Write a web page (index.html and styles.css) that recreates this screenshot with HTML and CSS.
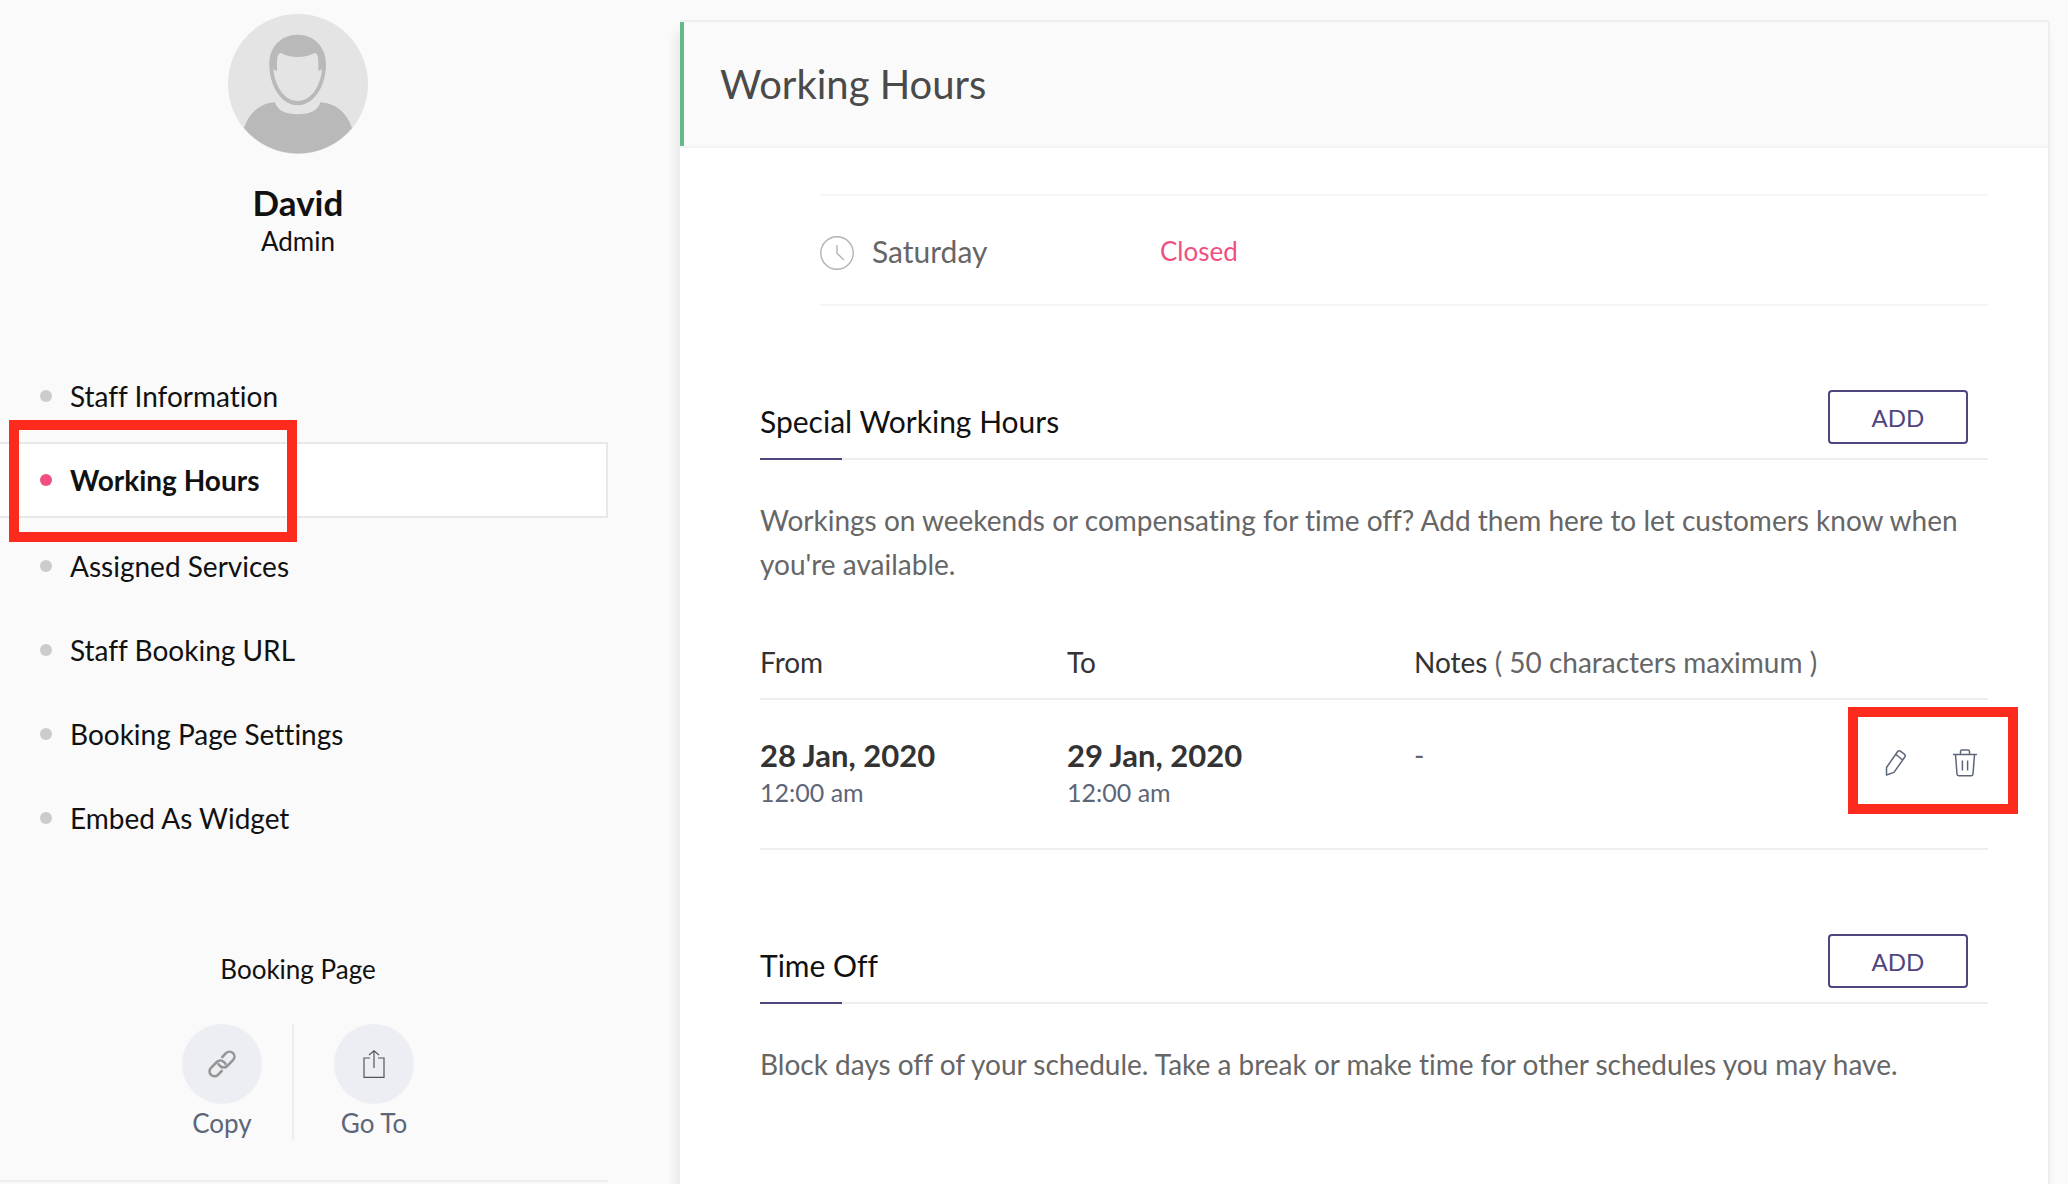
FILE: index.html
```html
<!DOCTYPE html>
<html lang="en">
<head>
<meta charset="utf-8">
<title>Working Hours</title>
<link rel="stylesheet" href="styles.css">
</head>
<body>
<aside class="sidebar">
    <div class="profile">
        <svg class="avatar" viewBox="0 0 140 140" aria-hidden="true">
            <circle cx="70" cy="70" r="70" fill="#e4e4e4"/>
            <path fill="#b9b9b9" d="M16 114C21 99 32 89 47 88.300C49 96 57 100.300 69.700 100.300S90.500 96 92.300 88.300C108 89 119 99 124 114A70 70 0 0 1 16 114z"/>
            <path fill="#b9b9b9" fill-rule="evenodd" d="M69.700 20.700C86 20.700 98 33 98 50C98 72 86 91.300 69.700 91.300S41.300 72 41.300 50C41.300 33 53 20.700 69.700 20.700zM52.300 38.700C49.500 41 49 44 49 48V57L45.300 55.300C47 72 56 87 69.700 87S92.500 72 94 55.300L90.300 57V48C90.300 44 90 41 87.300 38.700C77 44.300 62 44.300 52.300 38.700z"/>
        </svg>
        <h2 class="name">David</h2>
        <p class="role">Admin</p>
    </div>

    <nav>
        <ul class="menu">
            <li><a href="#info">Staff Information</a></li>
            <li class="active"><a href="#hours">Working Hours</a><span class="highlight"></span></li>
            <li><a href="#services">Assigned Services</a></li>
            <li><a href="#url">Staff Booking URL</a></li>
            <li><a href="#settings">Booking Page Settings</a></li>
            <li><a href="#widget">Embed As Widget</a></li>
        </ul>
    </nav>

    <div class="booking">
        <p class="booking-title">Booking Page</p>
        <div class="booking-links">
            <button type="button" class="round-btn copy">
                <span class="circle">
                    <svg width="28" height="28" viewBox="0 0 28 28" fill="none" stroke="#959595" stroke-width="2.600" stroke-linecap="round" aria-hidden="true">
                        <path d="M14.300 7L18 3.200a4.900 4.900 0 0 1 7 7L19.200 16a4.900 4.900 0 0 1-7 0q-1.200-.8-1.700-1.800"/>
                        <path d="M13.700 21L10 24.800a4.900 4.900 0 0 1-7-7L8.800 12a4.900 4.900 0 0 1 7 0q1.200.8 1.700 1.800"/>
                    </svg>
                </span>
                Copy
            </button>
            <span class="divider"></span>
            <a href="#booking" class="round-btn goto">
                <span class="circle">
                    <svg width="22" height="28" viewBox="0 0 22 28" fill="none" stroke="#555" stroke-width="1.200" aria-hidden="true">
                        <path d="M7 8H1V27.400H21V8H15M11 .8V18M6 5L11 .8L16 5"/>
                    </svg>
                </span>
                Go To
            </a>
        </div>
    </div>
</aside>

<main class="panel">
    <header class="panel-header">
        <h1>Working Hours</h1>
    </header>

    <div class="panel-body">
        <div class="day">
            <span class="day-name">
                <svg width="34" height="34" viewBox="0 0 34 34" fill="none" stroke="#b3b3b3" stroke-width="1.400" aria-hidden="true">
                    <circle cx="17" cy="17" r="16.200"/>
                    <path d="M17 9V17.300L24 24"/>
                </svg>
                Saturday
            </span>
            <span class="closed">Closed</span>
        </div>

        <section>
            <div class="section-header">
                <h2>Special Working Hours</h2>
                <button type="button" class="add">ADD</button>
            </div>
            <p class="hint">Workings on weekends or compensating for time off? Add them here to let customers know when you're available.</p>

            <table>
                <thead>
                    <tr>
                        <th class="col-from">From</th>
                        <th class="col-to">To</th>
                        <th colspan="2">Notes <span class="limit">( 50 characters maximum )</span></th>
                    </tr>
                </thead>
                <tbody>
                    <tr>
                        <td><div class="date">28 Jan, 2020</div><div class="time">12:00 am</div></td>
                        <td><div class="date">29 Jan, 2020</div><div class="time">12:00 am</div></td>
                        <td class="note">-</td>
                        <td class="actions">
                            <div class="icons">
                                <button type="button" aria-label="Edit">
                                    <svg width="22" height="28" viewBox="0 0 22 28" fill="none" stroke="#5c6678" stroke-width="1.500" stroke-linejoin="round" aria-hidden="true">
                                        <path d="M1.500 26V18.500L12.500 2.700q1.200-1.700 2.900-.5l3.900 2.900q1.600 1.300.5 2.900L9 23.400zM10.700 5.200l6.900 5.800"/>
                                    </svg>
                                </button>
                                <button type="button" aria-label="Delete">
                                    <svg width="24" height="28" viewBox="0 0 24 28" fill="none" stroke="#5c6678" stroke-width="1.500" aria-hidden="true">
                                        <path d="M0 5.500H24M7.500 5.500V2.500q0-1.500 1.500-1.500h6q1.500 0 1.500 1.500V5.500M2.500 5.500L4 25q.1 1.800 1.800 1.800H18.200q1.700 0 1.800-1.800L21.500 5.500M9.400 11.500V21.500M14.600 11.500V21.500"/>
                                    </svg>
                                </button>
                            </div>
                            <span class="highlight"></span>
                        </td>
                    </tr>
                </tbody>
            </table>
        </section>

        <section>
            <div class="section-header">
                <h2>Time Off</h2>
                <button type="button" class="add">ADD</button>
            </div>
            <p class="hint">Block days off of your schedule. Take a break or make time for other schedules you may have.</p>
        </section>
    </div>
</main>
</body>
</html>
```
FILE: styles.css
```css
* {
    box-sizing: border-box;
}

body {
    display: flex;
    min-height: 100vh;
    margin: 0;
    background-color: #fafafa;
    color: #111;
    font-family: Lato, "Open Sans", sans-serif;
    font-size: 28px;
    font-variant-ligatures: no-common-ligatures;
}

h1, h2, p, ul {
    margin: 0;
    padding: 0;
}

a {
    color: inherit;
    text-decoration: none;
}

button {
    padding: 0;
    border: none;
    background: none;
    font-family: inherit;
    cursor: pointer;
}

svg {
    display: block;
}

/* red marker frames */
.highlight {
    position: absolute;
    border: 10px solid #fc2b1e;
    pointer-events: none;
}

/* sidebar */
.sidebar {
    flex: 0 0 608px;
    align-self: flex-start;
    padding: 14px 0 40px;
    border-bottom: 2px solid #eee;
}

.profile, .booking {
    display: flex;
    flex-direction: column;
    align-items: center;
    padding-right: 12px;
}

.avatar {
    width: 140px;
    height: 140px;
}

.name {
    margin-top: 28px;
    font-size: 35px;
    font-weight: 700;
    line-height: 40px;
}

.role {
    margin-top: 3px;
    font-size: 26px;
    line-height: 32px;
}

.menu {
    display: flex;
    flex-direction: column;
    gap: 8px;
    margin-top: 101px;
    list-style: none;
}

.menu li {
    position: relative;
}

.menu a {
    display: flex;
    align-items: center;
    gap: 18px;
    height: 76px;
    padding-left: 40px;
}

.menu a::before {
    content: "";
    width: 12px;
    height: 12px;
    border-radius: 50%;
    background-color: #ccc;
}

.menu .active {
    margin-bottom: 2px;
}

.active a {
    border: 2px solid #e8e8e8;
    border-left: none;
    background-color: #fff;
    font-weight: 700;
}

.active a::before {
    background-color: #f0507f;
}

.active .highlight {
    top: -22px;
    left: 9px;
    width: 288px;
    height: 122px;
}

.booking {
    margin-top: 97px;
}

.booking-title {
    font-size: 26px;
    line-height: 32px;
}

.booking-links {
    display: flex;
    margin-top: 39px;
}

.round-btn {
    display: flex;
    flex-direction: column;
    align-items: center;
    gap: 3px;
    width: 80px;
    padding-bottom: 1px;
    color: #5c6678;
    font-size: 26px;
    line-height: 32px;
}

.circle {
    display: flex;
    align-items: center;
    justify-content: center;
    width: 80px;
    height: 80px;
    border-radius: 50%;
    background-color: #edeef3;
}

.copy {
    margin-right: 30px;
}

.divider {
    width: 2px;
    background-color: #eee;
}

.goto {
    margin-left: 40px;
}

/* main panel */
.panel {
    flex: 1;
    margin: 20px 18px 0 72px;
    border-top: 2px solid #eee;
    border-right: 2px solid #eee;
    border-top-right-radius: 4px;
    background-color: #fff;
    box-shadow: -4px 12px 12px rgba(0, 0, 0, 0.08);
}

.panel-header {
    display: flex;
    align-items: center;
    height: 124px;
    padding-left: 36px;
    border-left: 4px solid #66b88a;
    background-color: #fafafa;
}

h1 {
    color: #4a4a4a;
    font-size: 40px;
    font-weight: 400;
    line-height: 48px;
}

.panel-body {
    padding: 46px 60px 40px 80px;
    border-top: 2px solid #f3f3f3;
}

.day {
    display: flex;
    margin-left: 60px;
    padding: 40px 0 34px;
    border-top: 2px solid #f5f5f5;
    border-bottom: 2px solid #f5f5f5;
    line-height: 30px;
}

.day-name {
    display: flex;
    gap: 18px;
    width: 340px;
    color: #666;
    font-size: 30px;
}

.closed {
    color: #f0507f;
    font-size: 26px;
}

section {
    margin-top: 84px;
}

.section-header {
    position: relative;
    display: flex;
    align-items: flex-end;
    justify-content: space-between;
    padding: 0 20px 14px 0;
    border-bottom: 2px solid #eee;
}

.section-header::after {
    content: "";
    position: absolute;
    bottom: -2px;
    left: 0;
    width: 82px;
    height: 2px;
    background-color: #50457f;
}

.section-header h2 {
    font-size: 30px;
    font-weight: 400;
    line-height: 46px;
}

.add {
    width: 140px;
    height: 54px;
    border: 2px solid #50457f;
    border-radius: 4px;
    color: #50457f;
    font-size: 24px;
}

.hint {
    margin-top: 38px;
    color: #666;
    line-height: 44px;
}

table {
    width: 100%;
    margin-top: 54px;
    border-collapse: separate;
    border-spacing: 0;
    table-layout: fixed;
}

th {
    padding: 0 0 14px;
    border-bottom: 2px solid #eee;
    color: #333;
    font-weight: 400;
    line-height: 44px;
    text-align: left;
}

.col-from {
    width: 25%;
}

.col-to {
    width: 347px;
}

.limit {
    color: #666;
}

td {
    position: relative;
    padding: 37px 0 40px;
    border-bottom: 2px solid #eee;
    vertical-align: top;
}

.date {
    color: #333;
    font-size: 31px;
    font-weight: 700;
    line-height: 36px;
}

.time {
    margin-top: 3px;
    color: #5c6678;
    font-size: 25px;
    line-height: 32px;
}

.note {
    color: #666;
    line-height: 36px;
}

.icons {
    display: flex;
    justify-content: flex-end;
    gap: 23px;
    padding-top: 12px;
}

.icons button {
    display: flex;
    justify-content: center;
    width: 46px;
}

.actions .highlight {
    top: 7px;
    right: -30px;
    width: 170px;
    height: 107px;
}
```
